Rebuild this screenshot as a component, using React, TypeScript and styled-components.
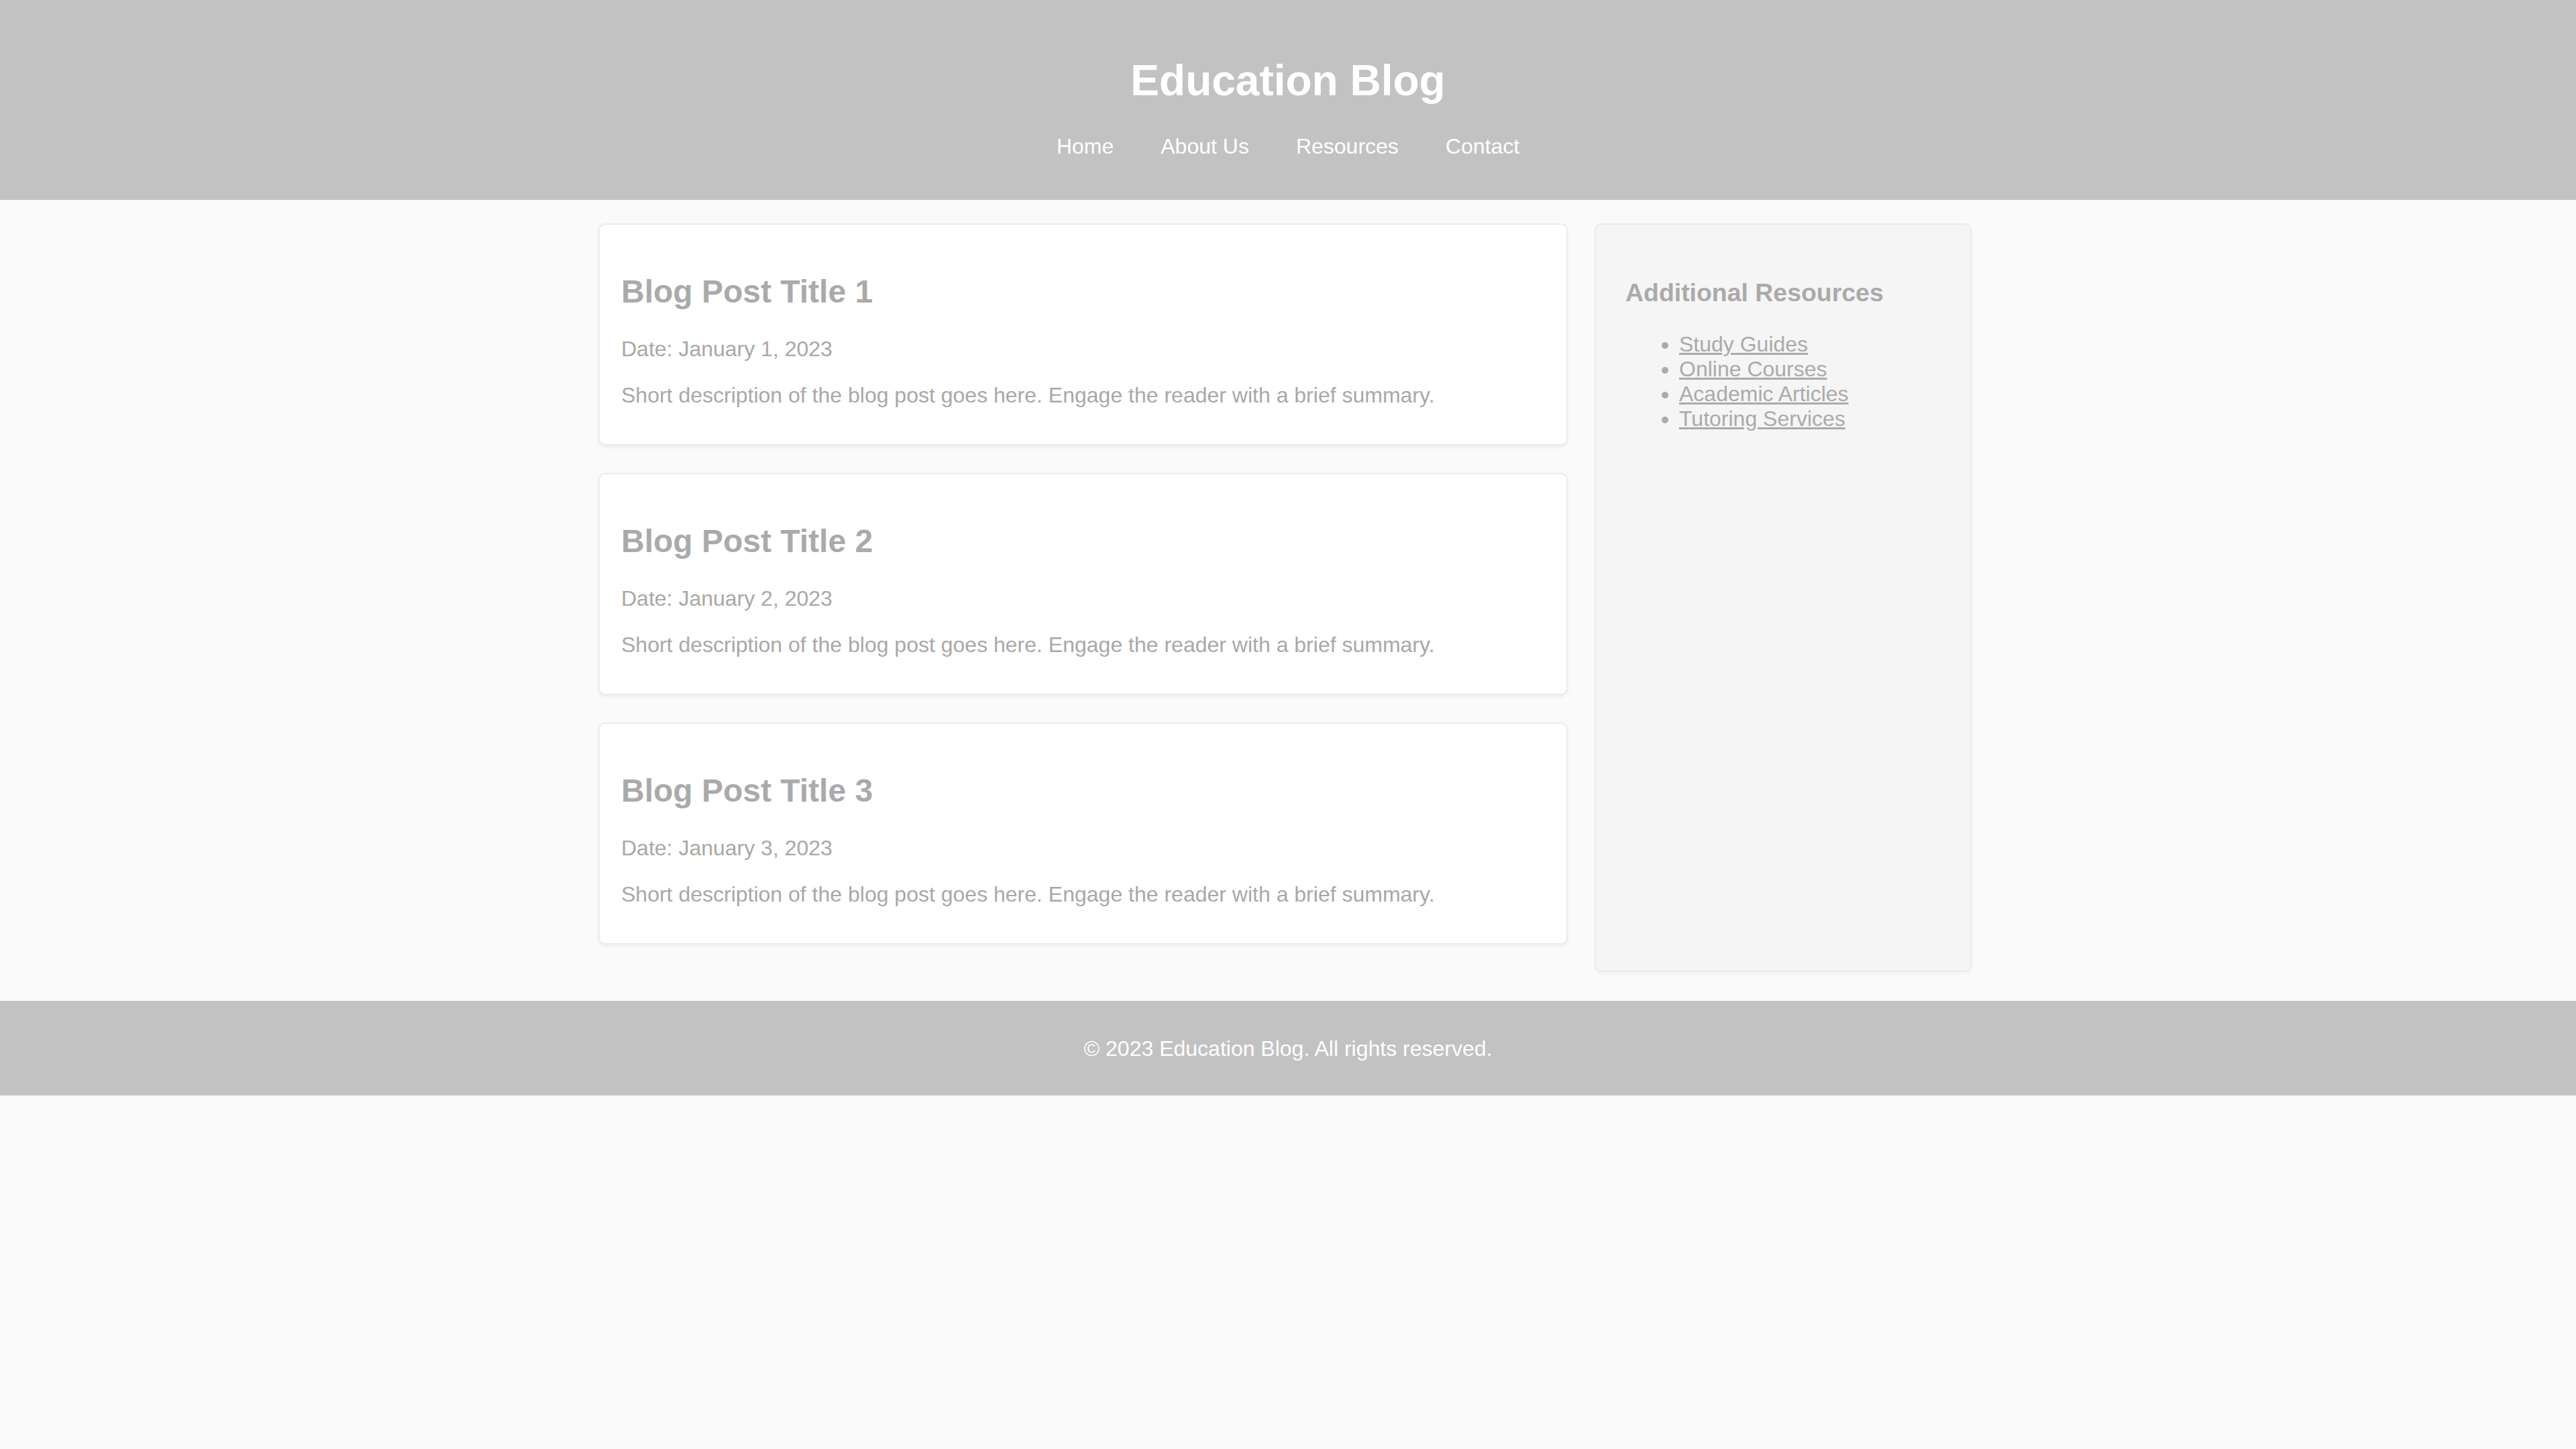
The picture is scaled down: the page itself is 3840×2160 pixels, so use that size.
import styled, { createGlobalStyle } from "styled-components";

const GlobalStyle = createGlobalStyle`
  html, body {
    margin: 0;
    padding: 0;
    background-color: #fafafa;
    font-family: "Liberation Sans", Arial, sans-serif;
    color: #aaaaaa;
  }
`;

const Header = styled.header`
  background-color: #c2c2c2;
  color: #ffffff;
  text-align: center;
  padding: 40px 0 61px;
`;

const Title = styled.h1`
  font-size: 64px;
  font-weight: bold;
  margin: 43px 0;
  line-height: normal;
`;

const NavList = styled.ul`
  display: flex;
  justify-content: center;
  gap: 70px;
  list-style: none;
  padding: 0;
  margin: 0;
`;

const NavLink = styled.a`
  color: #ffffff;
  text-decoration: none;
  font-size: 32px;
`;

const Main = styled.main`
  display: grid;
  grid-template-columns: 1445px 562px;
  gap: 40px;
  justify-content: center;
  padding: 35px 9px 43px 0;
`;

const Posts = styled.section`
  display: flex;
  flex-direction: column;
`;

const Card = styled.article`
  background-color: #ffffff;
  border: 2px solid #ebebeb;
  border-radius: 10px;
  box-shadow: 0 3px 5px rgba(0, 0, 0, 0.05);
  padding: 32px 32px 22px;
  margin-bottom: 41px;
`;

const CardTitle = styled.h2`
  font-size: 48px;
  font-weight: bold;
  color: #aaaaaa;
  margin: 40px 0;
`;

const Text = styled.p`
  font-size: 32px;
  color: #a8a8a8;
  margin: 32px 0;
`;

const Sidebar = styled.aside`
  background-color: #f5f5f5;
  border: 2px solid #ebebeb;
  border-radius: 10px;
  box-shadow: 0 3px 5px rgba(0, 0, 0, 0.03);
  padding: 43px 40px 40px 44px;
`;

const SideTitle = styled.h3`
  font-size: 37.44px;
  font-weight: bold;
  color: #aaaaaa;
  margin: 37px 0;
`;

const ResourceList = styled.ul`
  margin: 34px 0;
  padding-left: 80px;
  font-size: 32px;
  color: #aaaaaa;
`;

const ResourceLink = styled.a`
  color: #aaaaaa;
  text-decoration: underline;
`;

const Footer = styled.footer`
  background-color: #c2c2c2;
  color: #ffffff;
  text-align: center;
  padding: 20px 0;

  p {
    font-size: 32px;
    margin: 33px 0 31px;
  }
`;

const navItems = ["Home", "About Us", "Resources", "Contact"];

const posts = [
  { title: "Blog Post Title 1", date: "January 1, 2023" },
  { title: "Blog Post Title 2", date: "January 2, 2023" },
  { title: "Blog Post Title 3", date: "January 3, 2023" },
];

const resources = [
  "Study Guides",
  "Online Courses",
  "Academic Articles",
  "Tutoring Services",
];

export default function App() {
  return (
    <>
      <GlobalStyle />
      <Header>
        <Title>Education Blog</Title>
        <nav>
          <NavList>
            {navItems.map((item) => (
              <li key={item}>
                <NavLink href="#">{item}</NavLink>
              </li>
            ))}
          </NavList>
        </nav>
      </Header>
      <Main>
        <Posts>
          {posts.map((post) => (
            <Card key={post.title}>
              <CardTitle>{post.title}</CardTitle>
              <Text>Date: {post.date}</Text>
              <Text>
                Short description of the blog post goes here. Engage the reader
                with a brief summary.
              </Text>
            </Card>
          ))}
        </Posts>
        <Sidebar>
          <SideTitle>Additional Resources</SideTitle>
          <ResourceList>
            {resources.map((r) => (
              <li key={r}>
                <ResourceLink href="#">{r}</ResourceLink>
              </li>
            ))}
          </ResourceList>
        </Sidebar>
      </Main>
      <Footer>
        <p>© 2023 Education Blog. All rights reserved.</p>
      </Footer>
    </>
  );
}
